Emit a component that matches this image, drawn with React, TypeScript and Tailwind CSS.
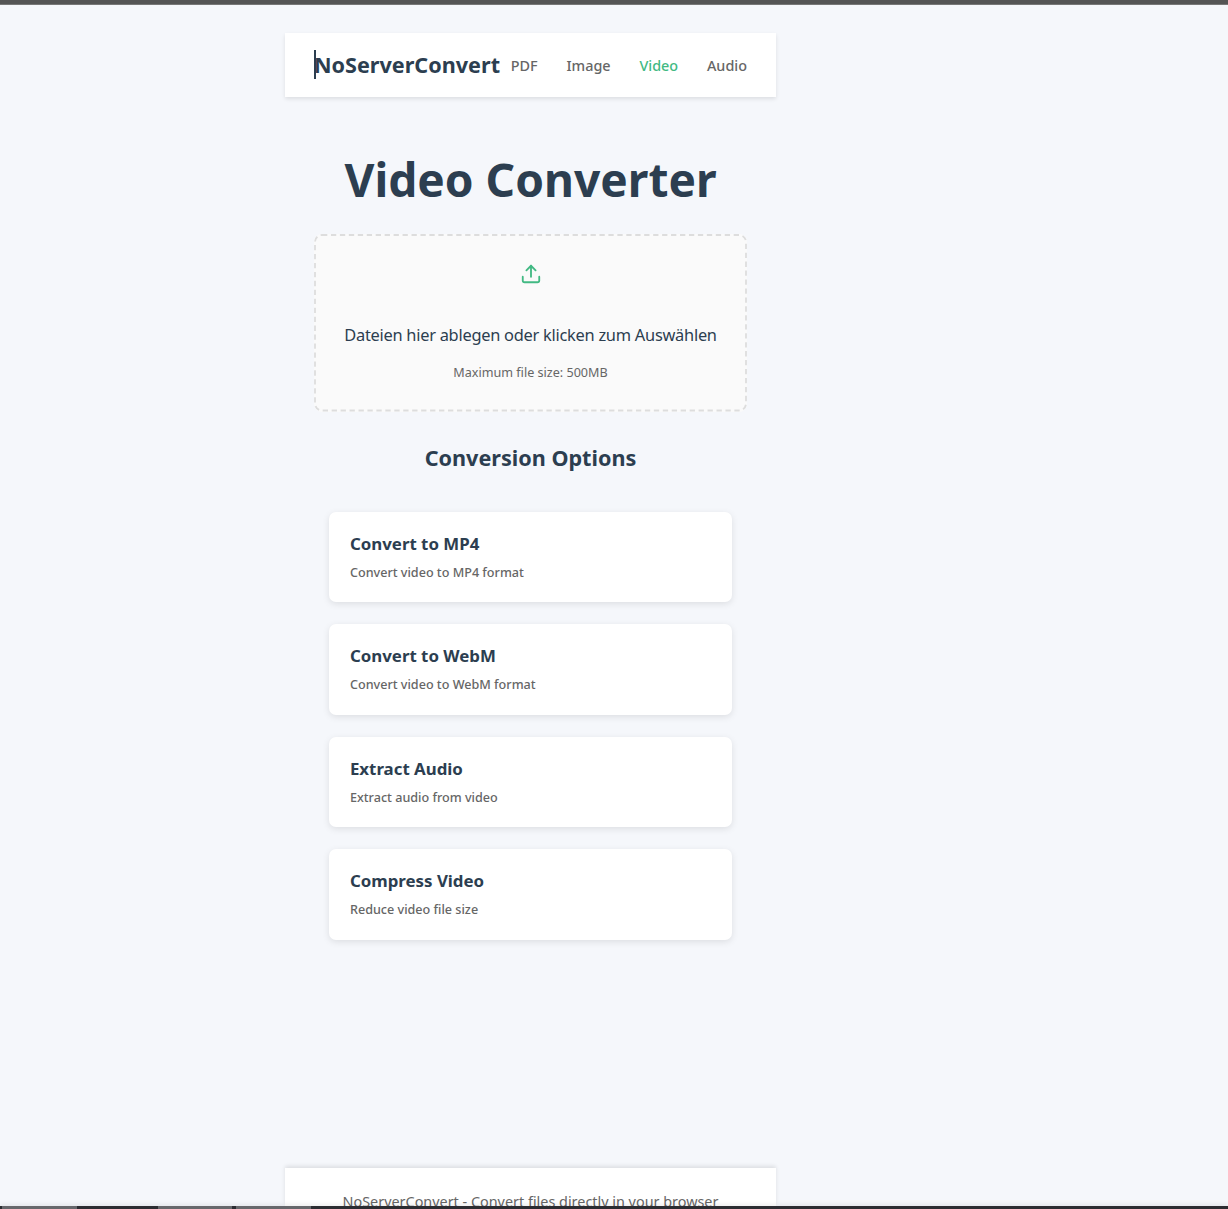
const navItems = ["PDF", "Image", "Video", "Audio"];

const options = [
  { title: "Convert to MP4", text: "Convert video to MP4 format" },
  { title: "Convert to WebM", text: "Convert video to WebM format" },
  { title: "Extract Audio", text: "Extract audio from video" },
  { title: "Compress Video", text: "Reduce video file size" },
];

function Header() {
  return (
    <header className="flex h-16 items-center justify-between bg-white px-[29px] shadow-[0_2px_4px_rgba(0,0,0,0.1)]">
      <div className="relative -mt-px text-[21.6px] leading-[29px] font-bold">
        <span className="absolute top-0 left-0 h-[29px] w-[2px] bg-[#2c3e50]" />
        NoServerConvert
      </div>
      <nav className="flex gap-[28.8px] pt-px text-[14.4px] leading-[22px] font-medium text-[#666]">
        {navItems.map((item) => (
          <a key={item} className={item === "Video" ? "text-[#42b983]" : ""}>
            {item}
          </a>
        ))}
      </nav>
    </header>
  );
}

function DropZone() {
  return (
    <div className="relative flex h-[178px] w-[433px] flex-col items-center rounded-lg bg-[#fafafa] pt-[29px]">
      <svg className="absolute inset-0 h-full w-full" fill="none" stroke="#dddddd" strokeWidth="1.8">
        <rect x="1" y="1" width="431" height="175.5" rx="7" strokeDasharray="5.3 3.65" />
      </svg>
      <svg
        className="relative h-[22px] w-[22px]"
        viewBox="0 0 24 24"
        fill="none"
        stroke="#42b983"
        strokeWidth="2"
        strokeLinecap="round"
        strokeLinejoin="round"
      >
        <path d="M21 15v4a2 2 0 0 1-2 2H5a2 2 0 0 1-2-2v-4" />
        <path d="M17 8l-5-5-5 5" />
        <path d="M12 3v12" />
      </svg>
      <p className="relative mt-[37px] text-[16.4px] leading-[26px] tracking-[-0.26px] whitespace-nowrap">
        Dateien hier ablegen oder klicken zum Auswählen
      </p>
      <p className="relative mt-[15px] text-[12.6px] leading-[20px] text-[#666]">Maximum file size: 500MB</p>
    </div>
  );
}

export default function App() {
  return (
    <div className="flex h-[1209px] flex-col overflow-hidden bg-[#f5f7fb] font-['Noto_Sans',sans-serif] text-[#2c3e50]">
      <div className="h-[5px] shrink-0 border-b border-[#777] bg-[#555]" />
      <div className="ml-[285px] flex min-h-0 w-[491px] flex-1 flex-col pt-7">
        <Header />
        <main className="flex flex-1 flex-col items-center pt-[51px]">
          <h1 className="text-[46.1px] leading-[64px] font-bold whitespace-nowrap">Video Converter</h1>
          <div className="mt-[22px]">
            <DropZone />
          </div>
          <h2 className="mt-[30px] text-[21.6px] leading-8 font-bold">Conversion Options</h2>
          <div className="mt-[37.5px] flex w-[403.5px] flex-col gap-[22px]">
            {options.map((option) => (
              <button
                key={option.title}
                className="flex h-[90.5px] flex-col items-start rounded-[7px] bg-white px-[21.2px] pt-[20px] text-left shadow-[0_2px_7px_rgba(0,0,0,0.1)]"
              >
                <h3 className="text-[16.85px] leading-[23px] font-bold">{option.title}</h3>
                <p className="mt-[9px] text-[12.6px] leading-[18px] font-medium text-[#666]">{option.text}</p>
              </button>
            ))}
          </div>
        </main>
        <footer className="h-[38px] shrink-0 bg-white pt-[22px] text-center text-[14.4px] leading-[24px] text-[#666] shadow-[0_-2px_4px_rgba(0,0,0,0.1)]">
          NoServerConvert - Convert files directly in your browser
        </footer>
      </div>
      <div className="relative flex h-[3px] shrink-0 bg-[#2b2c31] pl-[2px] shadow-[0_-1px_5px_rgba(0,0,0,0.12)]">
        <span className="h-full w-[75px] bg-[#66676b]" />
        <span className="ml-[81px] h-full w-[74px] bg-[#66676b]" />
        <span className="ml-[4px] h-full w-[75px] bg-[#66676b]" />
      </div>
    </div>
  );
}
